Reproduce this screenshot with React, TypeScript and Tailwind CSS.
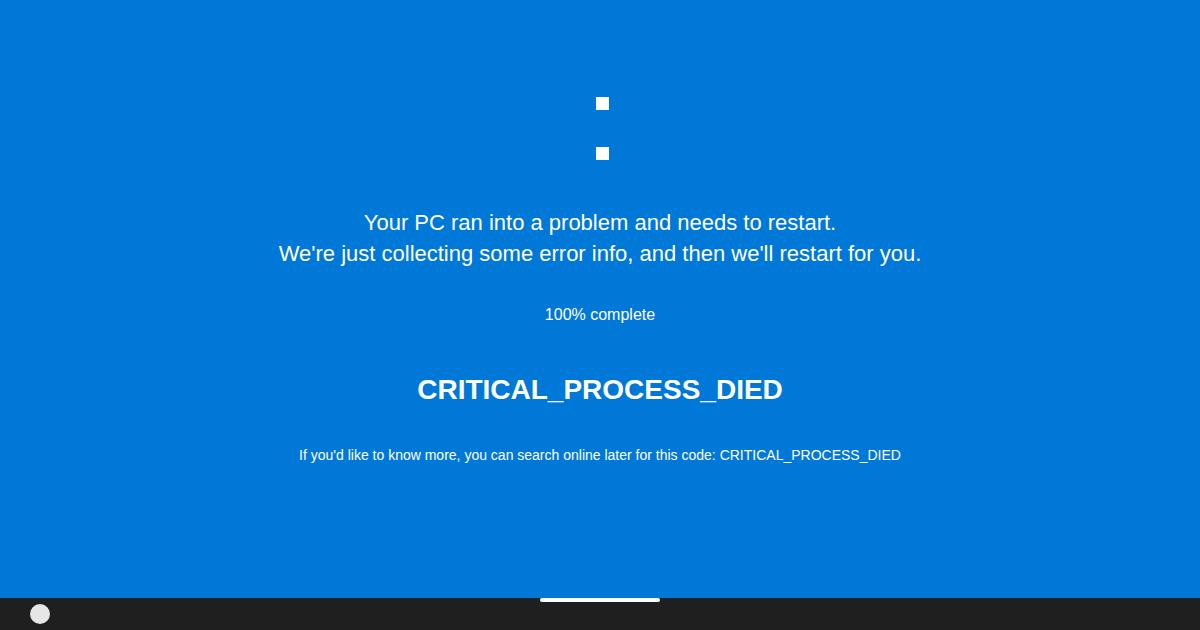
export default function App() {
  return (
    <div
      className="flex h-[630px] w-[1200px] flex-col overflow-hidden"
      style={{ fontFamily: '"Liberation Sans", Arial, sans-serif' }}
    >
      <main className="flex flex-1 flex-col items-center bg-[#0078d7] text-white">
        <div className="ml-[4px] mt-[97px] h-[13px] w-[13px] bg-white" />
        <div className="ml-[4px] mt-[37px] h-[13px] w-[13px] bg-white" />
        <div className="mt-[47px] text-center text-[22px] leading-[31px]">
          <p>Your PC ran into a problem and needs to restart.</p>
          <p>We're just collecting some error info, and then we'll restart for you.</p>
        </div>
        <p className="mt-[34px] text-[16px] leading-[24px]">100% complete</p>
        <h1 className="mt-[45px] text-[28px] font-bold leading-[36px]">CRITICAL_PROCESS_DIED</h1>
        <p className="mt-[37px] text-[14px] leading-[20px]">
          If you'd like to know more, you can search online later for this code: CRITICAL_PROCESS_DIED
        </p>
      </main>
      <footer className="relative flex h-[32px] shrink-0 items-center bg-[#1f1f1f] px-[30px]">
        <div className="h-[20px] w-[20px] rounded-full bg-[#e6e6e6]" />
        <div className="absolute left-[540px] top-0 h-[4px] w-[120px] rounded-full bg-white" />
      </footer>
    </div>
  );
}
